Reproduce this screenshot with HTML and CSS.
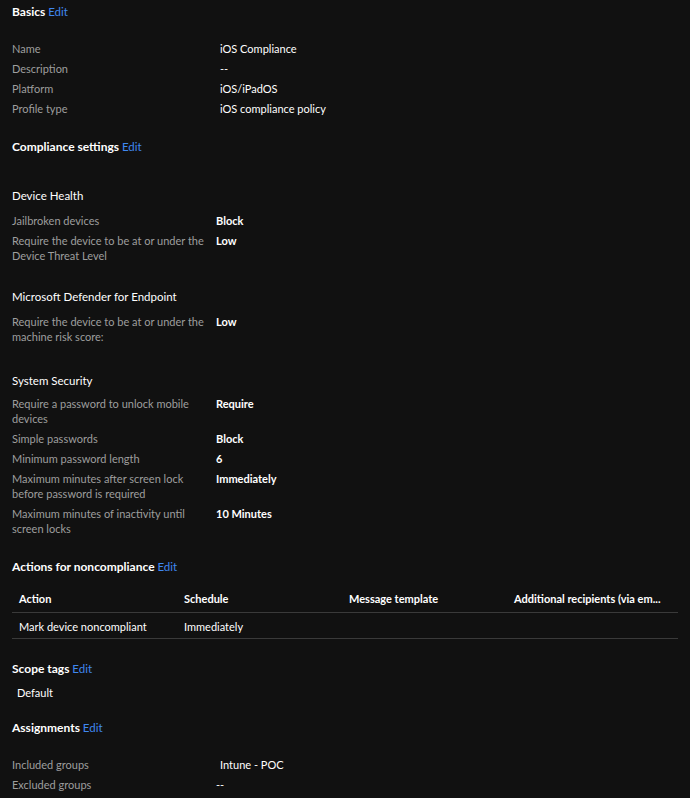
FILE: index.html
```html
<!DOCTYPE html>
<html lang="en">
<head>
<meta charset="utf-8">
<title>iOS Compliance</title>
<link rel="stylesheet" href="styles.css">
</head>
<body>
<main class="page">
  <section class="sec sec-basics">
    <h2 class="sec-title">Basics <a class="edit" href="#">Edit</a></h2>
    <div class="props props-basic">
      <div class="prop"><span class="label">Name</span><span class="value">iOS Compliance</span></div>
      <div class="prop"><span class="label">Description</span><span class="value">--</span></div>
      <div class="prop"><span class="label">Platform</span><span class="value">iOS/iPadOS</span></div>
      <div class="prop"><span class="label">Profile type</span><span class="value">iOS compliance policy</span></div>
    </div>
  </section>

  <section class="sec sec-compliance">
    <h2 class="sec-title">Compliance settings <a class="edit" href="#">Edit</a></h2>

    <h3 class="group-title group-health">Device Health</h3>
    <div class="props props-setting">
      <div class="prop"><span class="label">Jailbroken devices</span><span class="value">Block</span></div>
      <div class="prop"><span class="label">Require the device to be at or under the Device Threat Level</span><span class="value">Low</span></div>
    </div>

    <h3 class="group-title group-defender">Microsoft Defender for Endpoint</h3>
    <div class="props props-setting">
      <div class="prop"><span class="label">Require the device to be at or under the machine risk score:</span><span class="value">Low</span></div>
    </div>

    <h3 class="group-title group-system">System Security</h3>
    <div class="props props-setting">
      <div class="prop"><span class="label">Require a password to unlock mobile devices</span><span class="value">Require</span></div>
      <div class="prop"><span class="label">Simple passwords</span><span class="value">Block</span></div>
      <div class="prop"><span class="label">Minimum password length</span><span class="value">6</span></div>
      <div class="prop"><span class="label">Maximum minutes after screen lock before password is required</span><span class="value">Immediately</span></div>
      <div class="prop"><span class="label">Maximum minutes of inactivity until screen locks</span><span class="value">10 Minutes</span></div>
    </div>
  </section>

  <section class="sec sec-actions">
    <h2 class="sec-title">Actions for noncompliance <a class="edit" href="#">Edit</a></h2>
    <table class="grid">
      <thead>
        <tr><th>Action</th><th>Schedule</th><th>Message template</th><th>Additional recipients (via em...</th></tr>
      </thead>
      <tbody>
        <tr><td>Mark device noncompliant</td><td>Immediately</td><td></td><td></td></tr>
      </tbody>
    </table>
  </section>

  <section class="sec sec-scope">
    <h2 class="sec-title">Scope tags <a class="edit" href="#">Edit</a></h2>
    <p class="tag">Default</p>
  </section>

  <section class="sec sec-assign">
    <h2 class="sec-title">Assignments <a class="edit" href="#">Edit</a></h2>
    <div class="props props-assign">
      <div class="prop"><span class="label">Included groups</span><span class="value">Intune - POC</span></div>
      <div class="prop"><span class="label">Excluded groups</span><span class="value value-shift">--</span></div>
    </div>
  </section>
</main>
</body>
</html>
```

FILE: styles.css
```css
html, body {
  margin: 0;
  padding: 0;
  background: #111111;
}

body {
  font-family: Lato, "Noto Sans", "DejaVu Sans", sans-serif;
  font-size: 11px;
  color: #ffffff;
}

.page {
  padding: 4px 12px 0 12px;
  display: flex;
  flex-direction: column;
}

.sec-title {
  margin: 0;
  font-size: 12px;
  line-height: 16px;
  font-weight: 700;
  color: #ffffff;
}

.edit {
  font-size: 11.5px;
  font-weight: 400;
  color: #4088f0;
  text-decoration: none;
}

.sec-compliance { margin-top: 21px; }
.sec-actions { margin-top: 21px; }
.sec-scope { margin-top: 22px; }
.sec-assign { margin-top: 19px; }

.props {
  display: flex;
  flex-direction: column;
}

.props-basic { margin-top: 18px; }
.props-assign { margin-top: 18px; }

.prop {
  display: flex;
  align-items: flex-start;
  padding: 2.5px 0;
  line-height: 15px;
}

.label {
  color: #9e9e9e;
  flex: none;
}

.value {
  color: #ffffff;
}

.props-basic .label,
.props-assign .label {
  width: 208px;
}

.props-setting .label {
  width: 196px;
  margin-right: 8px;
}

.props-setting .value {
  font-weight: 700;
}

.value-shift {
  margin-left: -4px;
}

.group-title {
  margin: 0;
  font-size: 11.5px;
  line-height: 18px;
  font-weight: 400;
  color: #ffffff;
}

.group-health { margin-top: 32px; }
.group-defender { margin-top: 23px; }
.group-system { margin-top: 26px; }

.group-title + .props { margin-top: 5px; }
.group-system + .props { margin-top: 3px; }

.grid {
  margin-top: 9px;
  width: 666px;
  border-collapse: collapse;
  table-layout: fixed;
}

.grid th:nth-child(-n+3) {
  width: 151px;
}

.grid th,
.grid td {
  text-align: left;
  padding: 0 7px;
  white-space: nowrap;
  overflow: hidden;
  color: #ffffff;
}

.grid th {
  font-weight: 700;
  height: 28px;
  border-bottom: 1px solid #3a3a3a;
}

.grid td {
  font-weight: 400;
  height: 23px;
  padding-top: 2px;
  border-bottom: 1px solid #3a3a3a;
}

.tag {
  margin: 8px 0 0 5px;
  line-height: 16px;
  color: #ffffff;
}
```
